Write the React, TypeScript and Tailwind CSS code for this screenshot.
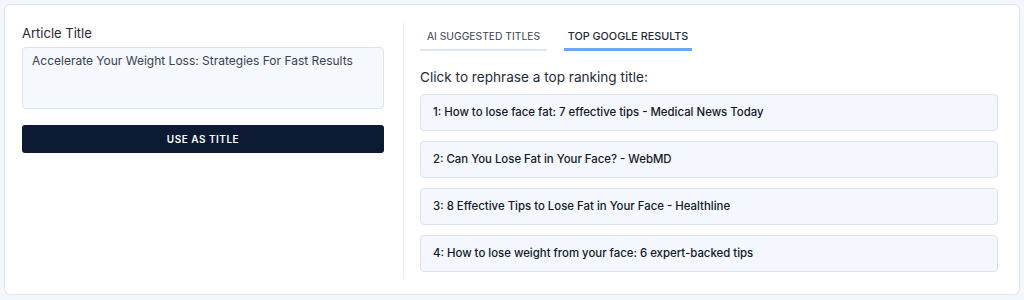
import React from "react";

const results = [
  "1: How to lose face fat: 7 effective tips - Medical News Today",
  "2: Can You Lose Fat in Your Face? - WebMD",
  "3: 8 Effective Tips to Lose Fat in Your Face - Healthline",
  "4: How to lose weight from your face: 6 expert-backed tips",
];

export default function App() {
  return (
    <div
      className="w-[1024px] h-[300px] bg-[#f3f6fb] p-[4px] text-[#1f2937]"
      style={{ fontFamily: "Inter, 'Noto Sans', sans-serif" }}
    >
      <div className="h-[291px] bg-white border border-[#dfe6f0] rounded-md flex">
        {/* left column */}
        <div className="w-[398px] shrink-0 pl-[17px] pr-[19px] pt-[18px]">
          <div className="text-[13px] text-[#1f2937] leading-[20px]">Article Title</div>
          <div className="mt-[4px] h-[62px] rounded-[4px] border border-[#dbe3ee] bg-[#f5f8fd] px-[9px] py-[5px] text-[12px] leading-[16px] text-[#374151]">
            Accelerate Your Weight Loss: Strategies For Fast Results
          </div>
          <button className="mt-[16px] w-full h-[28px] rounded-[3px] bg-[#0d1a33] text-white text-[10px] font-semibold tracking-[0.05em]">
            USE AS TITLE
          </button>
        </div>

        {/* divider */}
        <div className="mt-[17px] h-[257px] w-px bg-[#eef1f6]" />

        {/* right column */}
        <div className="flex-1 pl-[16px] pr-[21px] pt-[18px]">
          <div className="flex gap-[17px]">
            <div className="w-[127px] h-[28px] flex items-start justify-center pt-[6px] border-b-[2px] border-[#dbe6f5] text-[10.3px] text-[#374151] whitespace-nowrap">
              AI SUGGESTED TITLES
            </div>
            <div className="w-[128px] h-[28px] flex items-start justify-center pt-[6px] border-b-[3px] border-[#6aa8f5] text-[10.8px] font-medium text-[#1f2937] whitespace-nowrap">
              TOP GOOGLE RESULTS
            </div>
          </div>
          <div className="mt-[17px] text-[13.6px] text-[#1f2937] leading-[18px]">
            Click to rephrase a top ranking title:
          </div>
          <div className="mt-[8px] flex flex-col gap-[10px]">
            {results.map((r) => (
              <div
                key={r}
                className="h-[37px] rounded-[4px] border border-[#dbe3ee] bg-[#f4f7fd] px-[12px] flex items-center text-[11.4px] font-medium text-[#111827]"
              >
                {r}
              </div>
            ))}
          </div>
        </div>
      </div>
    </div>
  );
}
